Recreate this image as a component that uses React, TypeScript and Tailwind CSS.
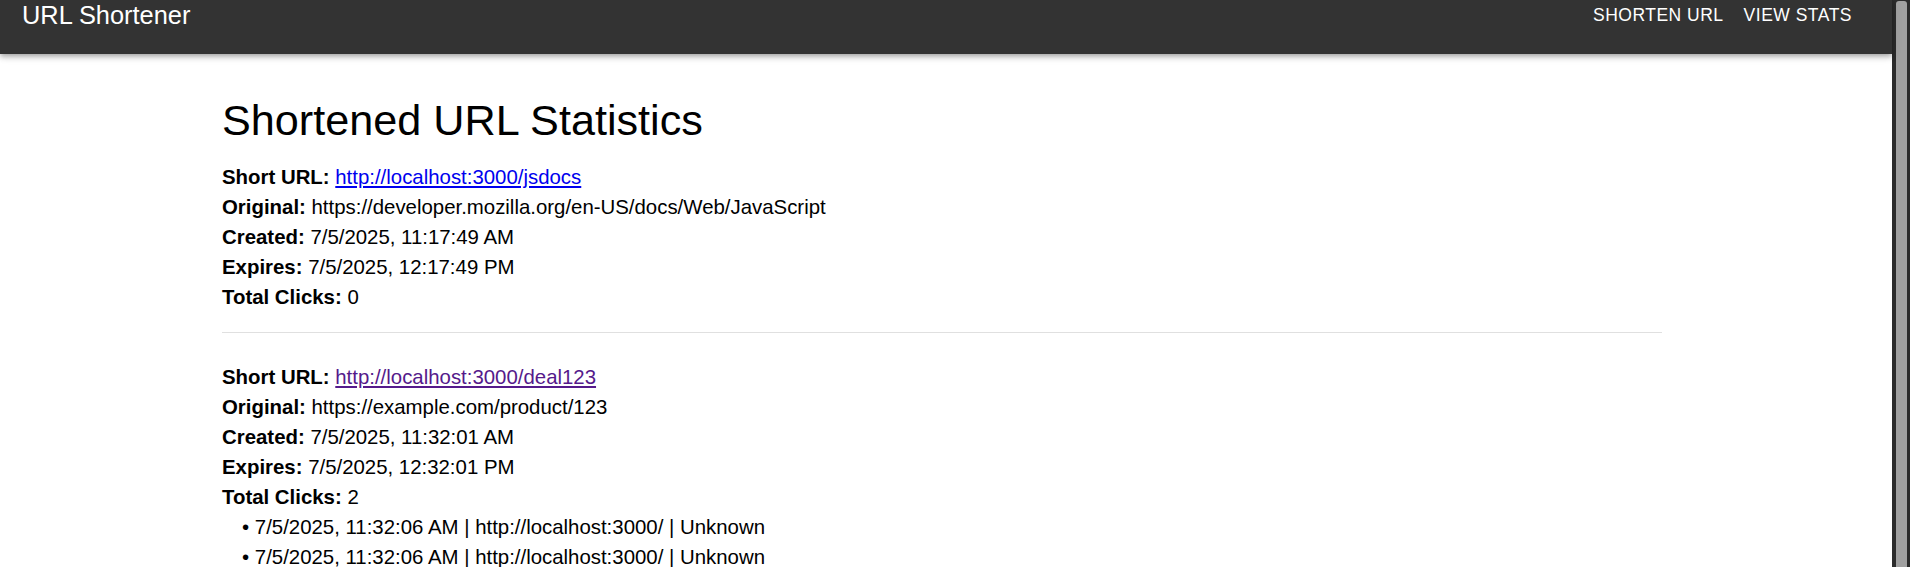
import React from "react";

type Click = { time: string; referrer: string; location: string };
type Entry = {
  shortUrl: string;
  original: string;
  created: string;
  expires: string;
  clicks: number;
  visited: boolean;
  details: Click[];
};

const entries: Entry[] = [
  {
    shortUrl: "http://localhost:3000/jsdocs",
    original: "https://developer.mozilla.org/en-US/docs/Web/JavaScript",
    created: "7/5/2025, 11:17:49 AM",
    expires: "7/5/2025, 12:17:49 PM",
    clicks: 0,
    visited: false,
    details: [],
  },
  {
    shortUrl: "http://localhost:3000/deal123",
    original: "https://example.com/product/123",
    created: "7/5/2025, 11:32:01 AM",
    expires: "7/5/2025, 12:32:01 PM",
    clicks: 2,
    visited: true,
    details: [
      { time: "7/5/2025, 11:32:06 AM", referrer: "http://localhost:3000/", location: "Unknown" },
      { time: "7/5/2025, 11:32:06 AM", referrer: "http://localhost:3000/", location: "Unknown" },
    ],
  },
];

function Row({ label, children }: { label: string; children: React.ReactNode }) {
  return (
    <div className="h-[30px] whitespace-nowrap">
      <span className="font-bold">{label}</span> {children}
    </div>
  );
}

function EntryBlock({ e }: { e: Entry }) {
  return (
    <div>
      <Row label="Short URL:">
        <a
          href="#"
          className={e.visited ? "text-[#551a8b] underline" : "text-[#0000ee] underline"}
        >
          {e.shortUrl}
        </a>
      </Row>
      <Row label="Original:">{e.original}</Row>
      <Row label="Created:">{e.created}</Row>
      <Row label="Expires:">{e.expires}</Row>
      <Row label="Total Clicks:">{e.clicks}</Row>
      {e.details.length > 0 && (
        <div className="pl-[20px]">
          {e.details.map((c, i) => (
            <div key={i} className="h-[30px] whitespace-nowrap">
              • {c.time} | {c.referrer} | {c.location}
            </div>
          ))}
        </div>
      )}
    </div>
  );
}

export default function App() {
  return (
    <div className="flex h-[567px] w-full overflow-hidden bg-white text-black font-['Liberation_Sans',Arial,sans-serif]">
      <div className="flex min-w-0 flex-1 flex-col">
        <header className="relative z-10 flex h-[54px] shrink-0 items-start justify-between bg-[#333333] pl-[22px] pr-[40px] text-white shadow-[0_2px_4px_-1px_rgba(0,0,0,0.2),0_4px_5px_0_rgba(0,0,0,0.14),0_1px_10px_0_rgba(0,0,0,0.12)]">
          <div className="mt-[1px] text-[25.4px] leading-[28px]">URL Shortener</div>
          <nav className="mt-[5px] flex gap-[20px] text-[17.5px] leading-[20px] tracking-[0.5px]">
            <a href="#">SHORTEN URL</a>
            <a href="#">VIEW STATS</a>
          </nav>
        </header>
        <main className="ml-[222px] w-[1440px] pt-[40px] text-[20.4px] leading-[30px]">
          <h1 className="mb-[15px] text-[43.2px] leading-[52.5px] font-normal">
            Shortened URL Statistics
          </h1>
          <EntryBlock e={entries[0]} />
          <div className="mt-[20px] mb-[29px] h-px bg-[#e0e0e0]" />
          <EntryBlock e={entries[1]} />
        </main>
      </div>
      <div className="h-full w-[18px] shrink-0 bg-[#2b2b2b] pl-[4px] pr-[3px] pt-[1px]">
        <div className="h-[600px] rounded-t-[3px] bg-[#a0a0a0]" />
      </div>
    </div>
  );
}
